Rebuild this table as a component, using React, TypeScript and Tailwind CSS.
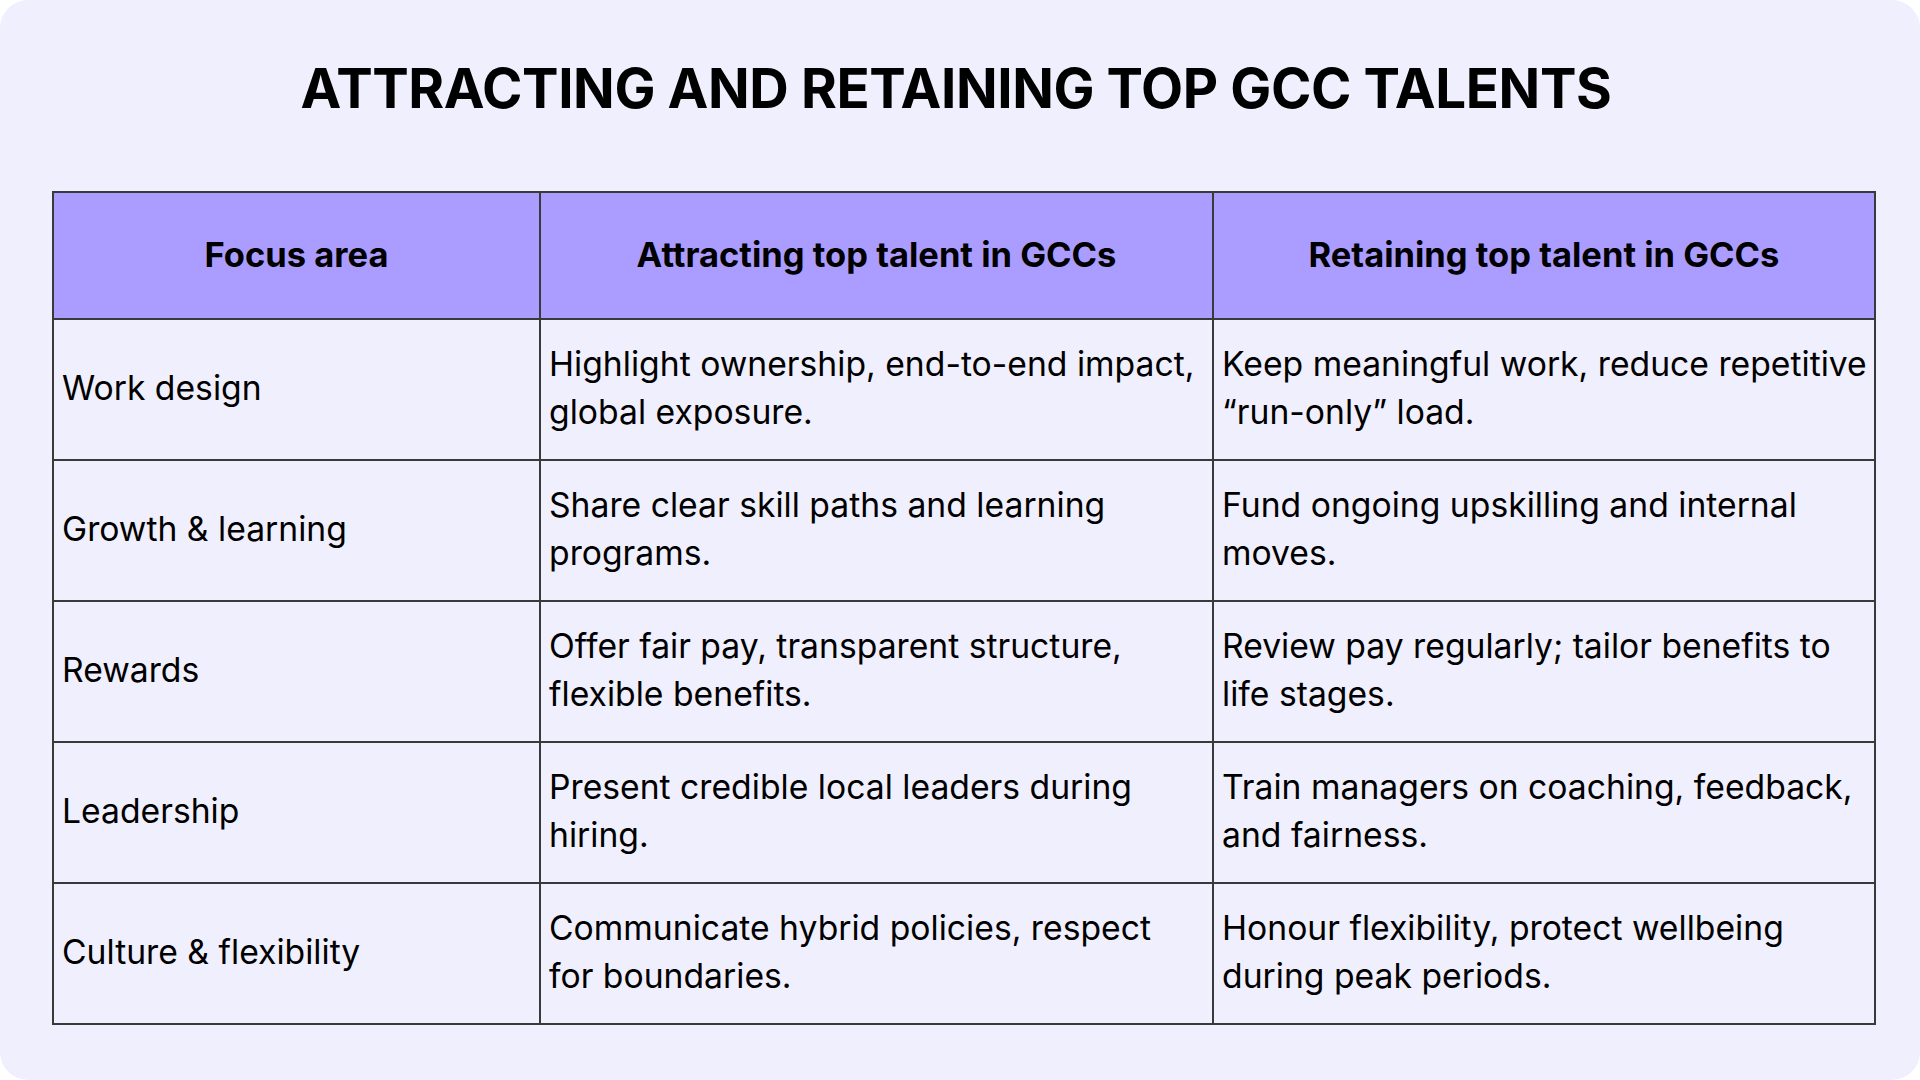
import React from 'react'

interface Row {
  area: string
  attract: string[]
  retain: string[]
}

const rows: Row[] = [
  {
    area: 'Work design',
    attract: ['Highlight ownership, end-to-end impact,', 'global exposure.'],
    retain: ['Keep meaningful work, reduce repetitive', '\u201crun-only\u201d load.'],
  },
  {
    area: 'Growth & learning',
    attract: ['Share clear skill paths and learning', 'programs.'],
    retain: ['Fund ongoing upskilling and internal', 'moves.'],
  },
  {
    area: 'Rewards',
    attract: ['Offer fair pay, transparent structure,', 'flexible benefits.'],
    retain: ['Review pay regularly; tailor benefits to', 'life stages.'],
  },
  {
    area: 'Leadership',
    attract: ['Present credible local leaders during', 'hiring.'],
    retain: ['Train managers on coaching, feedback,', 'and fairness.'],
  },
  {
    area: 'Culture & flexibility',
    attract: ['Communicate hybrid policies, respect', 'for boundaries.'],
    retain: ['Honour flexibility, protect wellbeing', 'during peak periods.'],
  },
]

function Lines({ lines }: { lines: string[] }) {
  return (
    <>
      {lines.map((l, i) => (
        <div key={i} className="whitespace-nowrap">
          {l}
        </div>
      ))}
    </>
  )
}

export default function App() {
  return (
    <div className="w-[1920px] h-[1080px] bg-white" style={{ fontFamily: 'Inter, "Noto Sans", sans-serif' }}>
      <div className="w-full h-full rounded-[28px] bg-[#f0effd] flex flex-col pt-[52px]">
        <h1 className="mr-[8px] text-center text-[54.7px] leading-[72px] font-bold text-black tracking-[-0.4px]">
          ATTRACTING AND RETAINING TOP GCC TALENTS
        </h1>

        <table className="ml-[52px] mt-[67px] table-fixed border-collapse text-black w-[1822px]">
          <colgroup>
            <col className="w-[487px]" />
            <col className="w-[673px]" />
            <col className="w-[662px]" />
          </colgroup>
          <thead>
            <tr className="h-[127px] bg-[#aa9dff]">
              <th className="border-2 border-[#3a3a3a] pb-[2px] text-[34.5px] font-bold text-center align-middle">Focus area</th>
              <th className="border-2 border-[#3a3a3a] pb-[2px] text-[34.5px] font-bold text-center align-middle">Attracting top talent in GCCs</th>
              <th className="border-2 border-[#3a3a3a] pb-[2px] text-[34.5px] font-bold text-center align-middle">Retaining top talent in GCCs</th>
            </tr>
          </thead>
          <tbody>
            {rows.map((r) => (
              <tr key={r.area} className="h-[141px]">
                <td className="border-2 border-[#3a3a3a] px-2 pb-[4px] text-[33.7px] leading-[48px] align-middle">{r.area}</td>
                <td className="border-2 border-[#3a3a3a] px-2 pb-[4px] text-[33.7px] leading-[48px] align-middle">
                  <Lines lines={r.attract} />
                </td>
                <td className="border-2 border-[#3a3a3a] px-2 pb-[4px] text-[33.7px] leading-[48px] align-middle">
                  <Lines lines={r.retain} />
                </td>
              </tr>
            ))}
          </tbody>
        </table>
      </div>
    </div>
  )
}
